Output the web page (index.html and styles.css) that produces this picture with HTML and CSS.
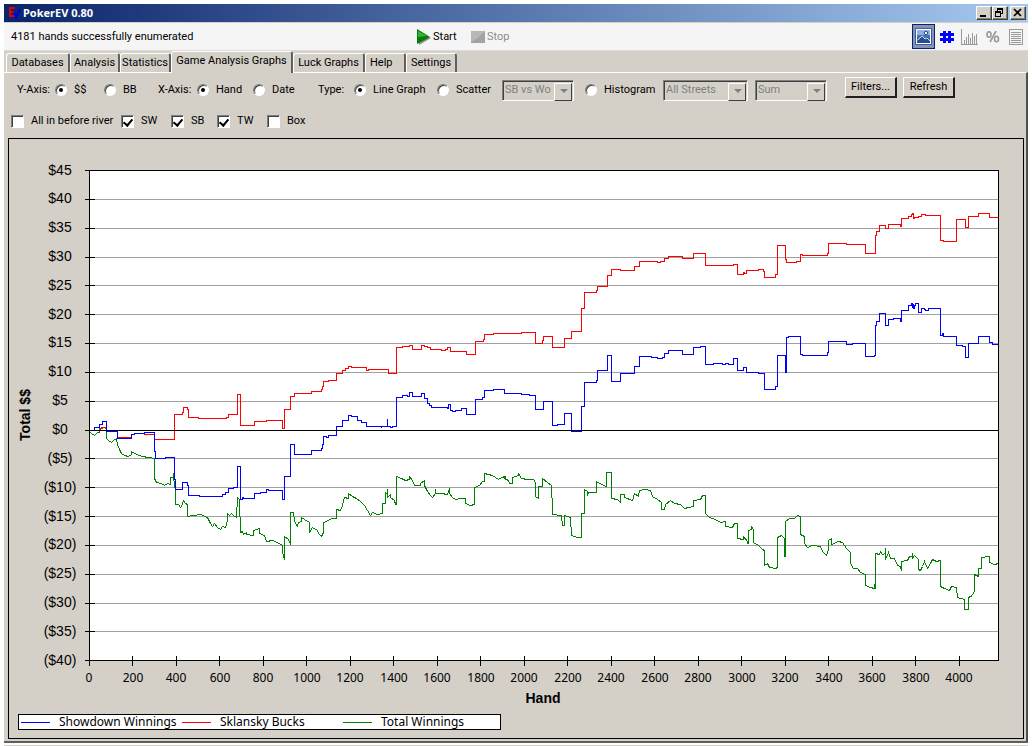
FILE: index.html
```html
<!DOCTYPE html>
<html lang="en">
<head>
<meta charset="utf-8">
<title>PokerEV 0.80</title>
<link rel="stylesheet" href="styles.css">
</head>
<body>
<div class="window">
  <header class="titlebar">
    <svg class="app-icon" width="14" height="14" viewBox="0 0 14 14" aria-hidden="true">
      <path d="M1 1H7V3H3V5H6V7H3V9H7V11H1Z" fill="#e00000"/>
      <path d="M6 6L8 12L12 3" fill="none" stroke="#0000e8" stroke-width="2"/>
    </svg>
    <h1 class="title">PokerEV 0.80</h1>
    <button class="caption" aria-label="Minimize"><svg width="12" height="10" viewBox="0 0 12 10"><path d="M2 7H8V9H2Z"/></svg></button>
    <button class="caption" aria-label="Restore"><svg width="12" height="10" viewBox="0 0 12 10" shape-rendering="crispEdges"><path d="M3 0H9V6H7V5H8V2H4V3H3ZM1 3H7V9H1ZM2 5V8H6V5Z" fill-rule="evenodd"/></svg></button>
    <button class="caption caption-close" aria-label="Close"><svg width="12" height="10" viewBox="0 0 12 10"><path d="M2 1L9 8M9 1L2 8" stroke="#000" stroke-width="1.7"/></svg></button>
  </header>

  <div class="toolbar">
    <p class="status">4181 hands successfully enumerated</p>
    <button class="tool tool-start"><svg width="14" height="16" viewBox="0 0 14 16"><path d="M2 3L14 9L2 16Z" fill="#8a8f8a"/><path d="M0 0L13 8L0 15Z" fill="#0a7a0a"/><path d="M1 2L10 7L1 8Z" fill="#35b335"/></svg>Start</button>
    <button class="tool tool-stop" disabled><svg width="14" height="12" viewBox="0 0 14 12"><path d="M0 0H14V12H0Z" fill="#a3a3a3"/><path d="M0 0H14L7 7L0 11Z" fill="#b8b8b8"/></svg>Stop</button>
    <div class="views">
      <button class="view view-on" aria-label="Graph view"><svg width="17" height="17" viewBox="0 0 17 17"><path d="M.5 .5H16.500V16.500H.5Z" fill="#fff" stroke="#3c5c98"/><path d="M2 2H15V15H2Z" fill="#4773b5"/><path d="M2 2H15V7H2Z" fill="#8eb1df"/><circle cx="11" cy="5" r="1.700" fill="#fff" stroke="#244c8c"/><path d="M2 14L7 8L10 11L12 9L15 12V15H2Z" fill="#274c8b"/><path d="M3 12L7 8L10 11L12 10L15 13" stroke="#c6dbf6" fill="none"/></svg></button>
      <button class="view" aria-label="Hands"><svg width="14" height="12" viewBox="0 0 14 12"><path d="M0 3.500H14M0 8.500H14M4.500 0V12M9.500 0V12" stroke="#00f" stroke-width="3"/></svg></button>
      <button class="view" aria-label="Histogram"><svg width="17" height="16" viewBox="0 0 17 16" shape-rendering="crispEdges"><path d="M.5 0V15.500H17M3.500 11V15M5.500 8V15M7.500 5V15M9.500 9V15M11.500 4V15M13.500 7V15M15.500 5V15" stroke="#999" fill="none"/></svg></button>
      <button class="view" aria-label="Percent"><svg width="14" height="12" viewBox="0 0 14 12"><g fill="none" stroke="#999" stroke-width="1.600"><ellipse cx="3" cy="3.500" rx="2" ry="2.700"/><ellipse cx="10.500" cy="8" rx="2" ry="2.700"/><path d="M10 0L4 11"/></g></svg></button>
      <button class="view" aria-label="Report"><svg width="14" height="16" viewBox="0 0 14 16" shape-rendering="crispEdges"><path d="M.5 .5H13.500V15.500H.5ZM2 3.500H12M2 5.500H12M2 7.500H12M2 9.500H12M2 11.500H12M2 13.500H12" stroke="#999" fill="none"/></svg></button>
    </div>
  </div>

  <nav class="tabs" role="tablist">
    <button class="tab" role="tab">Databases</button>
    <button class="tab" role="tab">Analysis</button>
    <button class="tab" role="tab">Statistics</button>
    <button class="tab tab-on" role="tab" aria-selected="true">Game Analysis Graphs</button>
    <button class="tab" role="tab">Luck Graphs</button>
    <button class="tab tab-left" role="tab">Help</button>
    <button class="tab" role="tab">Settings</button>
  </nav>

  <main class="page">
    <form class="options">
      <span>Y-Axis:</span>
      <label class="choice"><input type="radio" name="yaxis" checked>$$</label>
      <label class="choice"><input type="radio" name="yaxis">BB</label>
      <span>X-Axis:</span>
      <label class="choice"><input type="radio" name="xaxis" checked>Hand</label>
      <label class="choice"><input type="radio" name="xaxis">Date</label>
      <span>Type:</span>
      <label class="choice"><input type="radio" name="type" checked>Line Graph</label>
      <label class="choice"><input type="radio" name="type">Scatter</label>
      <div class="combo"><select disabled aria-label="Scatter series"><option>SB vs Wo</option></select></div>
      <label class="choice"><input type="radio" name="type">Histogram</label>
      <div class="combo"><select disabled aria-label="Streets"><option>All Streets</option></select></div>
      <div class="combo"><select disabled aria-label="Aggregate"><option>Sum</option></select></div>
      <button type="button" class="push">Filters...</button>
      <button type="button" class="push">Refresh</button>
    </form>
    <form class="series">
      <label class="check"><input type="checkbox">All in before river</label>
      <label class="check"><input type="checkbox" checked>SW</label>
      <label class="check"><input type="checkbox" checked>SB</label>
      <label class="check"><input type="checkbox" checked>TW</label>
      <label class="check"><input type="checkbox">Box</label>
    </form>

    <section class="panel">
      <svg class="chart" viewBox="9 139 1014 575" role="img" aria-label="Total winnings by hand">
        <rect x="89" y="170" width="910" height="491" fill="#fff"/>
        <g transform="translate(.5 .5)" shape-rendering="crispEdges" fill="none">
          <path class="grid" d="M89 199H998M89 228H998M89 257H998M89 285H998M89 314H998M89 343H998M89 372H998M89 401H998M89 458H998M89 487H998M89 516H998M89 545H998M89 574H998M89 603H998M89 631H998"/>
          <path class="total" d="M89 431L91 433L94 435L97 432H99V428L102 427H105L106 430V438L108 440L111 442L113 440L116 438L117 444L119 449L121 453L124 455L128 456L131 454V451L136 454L142 456L148 457L154 458V478L156 482L161 483L164 485L167 483L170 484V477H173V473L174 487H175V504H178L180 507L182 504L183 500L185 503L187 504V516L193 515L200 514L207 517L210 523L212 526L214 523L217 527L220 529L222 526L225 527L227 520V513L229 515L231 513L233 515L236 517L237 497L239 499L240 532L242 531L243 534L246 532V534L253 535V530L259 528V533L264 535L266 541L272 540L277 542L282 545V552L284 559V536L288 539L290 544V512H293L294 521L297 526L298 522L301 521V517L304 519L309 522V532L312 527L317 530L318 533L321 536L323 532V522L328 520L331 518H336V509L340 510L342 505L344 497L348 498V493L352 496L356 498L360 501L364 505L367 510L370 515L372 512L377 514L382 513V503H385V492L387 494V488V497L390 494V497L394 500L395 504H396V476L401 478L405 480L409 479V476L412 480L414 485H420V483L424 480V485L427 491L430 495L432 497L435 493V488V493H441L447 494L449 488V493L452 497L455 499L460 498H465V503L470 505L474 504V487L479 485L482 481H484V473L492 475L498 479L501 477L505 476L504 478L508 480L509 483H512V477L518 475V473L521 478L527 479H533L535 482V496L538 498V486H542V478L547 482L551 485L552 510V514L561 515L562 525H564V515L570 517L571 535L577 537H581V513H584V489L587 491V495L588 492H596V481L601 484L606 486V472H611V498L617 499L620 502V494H624V497L632 500L634 493L638 496L639 490L645 489L650 490L652 496L657 499L661 502V509H664L665 504L670 500L674 503L680 504L684 508L688 507L693 506V500L700 499L702 495H705V513L709 517L715 519L720 522L725 521V526L732 527L734 523H737V538L743 539V536L747 541V543H748V530L751 529V526L753 529V542L758 545L762 549L764 550V565L767 563L769 567L775 568L777 567V537L781 535L784 538V556H785V521L789 518L794 518L797 515L800 516V534L804 536V543L807 547L812 545L820 546L822 551L826 555L828 549V540L831 538V544L838 541L842 542L846 548L850 552V563L853 568L857 568L860 572L865 574V585L870 587L874 588V583V588H875V553L879 554L880 551L882 554L885 553V547V559L888 552L890 558H894L897 565L900 566L901 570V561L907 560L909 556H912V552V558L914 555L918 559V569L920 570L922 566L924 561L927 568L930 563L932 559L936 561L940 560V586L944 588L949 590L951 586L956 587L957 597L964 599V609H968V597L972 595L974 590V574L978 576V568H981V557L989 556V562L994 564L998 563"/>
          <path class="sklansky" d="M89 430H100V428H102V427H106V430H117V437H131V434H134V433H144V434H154V439H174V414H182V412H183V407H187V409H188V417H198V418H226V417H228V414H237V394H240V425H254V421H266V420H282V428H284V409H290V396H294V393H311V391H321V389H322V386H323V381H328V380H336V373H342V370H345V368H348V366H351V367H366V370H368V369H388V373H396V347H402V346H409V345H412V349H421V345H424V346H427V347H430V349H441V350H445V349H447V347H450V351H466V354H475V341H483V339H484V334H493V333H521V332H535V343H542V340H543V336H552V347H564V338H571V331H581V308H584V292H596V290H597V286H607V275H611V269H620V270H634V266H639V261H657V262H660V261H664V258H668V256H682V258H693V253H705V265H733V264H737V274H743V272H744V273H746V270H758V269H763V271H764V277H775V274H777V245H785V259H786V262H796V261H800V254H802V255H827V253H828V243H846V244H865V253H875V235H876V231H879V225H885V228H888V224H900V226H901V218H908V216H911V214H912V213H913V218H914V217H918V216H921V214H925V215H940V240H943V241H956V219H965V227H968V216H978V213H989V217H998"/>
          <path class="showdown" d="M89 430H94V427H99V424H102V421H106V431H117V438H131V434H134V433H144V432H154V451H155V458H165V457H174V479H175V489H182V482H187V485H188V495H199V496H222V494H225V492H228V488H233V487H237V466H240V499H242V497H243V498H254V493H260V492H266V489H268V490H282V499H284V476H290V444H294V454H311V450H321V448H322V444H323V436H326V437H328V435H336V426H342V420H348V415H351V416H357V420H361V422H366V426H381V427V426H387V418V426H390V427H392V426H396V397H402V395H407V396H409V392H412V396H421V393H424V398H427V403H429V405H431V407H447V408H448V404H450V410H452V411H455V410H461V408H466V414H475V399H482V397H484V390H493V389H504V393H521V394H529V395H535V409H543V401H552V425H557V424H564V413H571V431H581V406H584V382H596V380H597V370H607V355H611V381H620V373H634V366H639V356H651V357H657V358H662V357H664V353H668V350H682V354H693V347H700V346H705V364H713V363H722V364H725V363H728V364H733V358H737V370H743V367H746V372H758V373H764V389H775V386H777V355H785V372H786V337H788V336H800V354H802V355H827V352H828V341H846V344H852V343H865V356H874V355H875V325H876V321H879V313H885V325H888V319H893V318H900V321H901V310H908V305H911V303H912V307H913V303V308H914V305H915V303H918V312H921V308H924V309H925V310H928V308H940V335H942V333H943V336H956V345H962V346H965V357H968V343H978V335V336H989V342H992V344H998"/>
          <path class="axis" d="M84 170H998V660H84M89 170V665M84 430H998M84 199H94M84 228H94M84 257H94M84 285H94M84 314H94M84 343H94M84 372H94M84 401H94M84 458H94M84 487H94M84 516H94M84 545H94M84 574H94M84 603H94M84 631H94M132 655V665M176 655V665M219 655V665M263 655V665M306 655V665M350 655V665M393 655V665M437 655V665M480 655V665M524 655V665M567 655V665M611 655V665M654 655V665M698 655V665M741 655V665M785 655V665M828 655V665M872 655V665M915 655V665M959 655V665"/>
        </g>
        <g class="y-labels">
          <text x="60" y="175">$45</text><text x="60" y="203">$40</text><text x="60" y="232">$35</text><text x="60" y="261">$30</text><text x="60" y="290">$25</text><text x="60" y="319">$20</text><text x="60" y="347">$15</text><text x="60" y="376">$10</text><text x="60" y="405">$5</text><text x="60" y="434">$0</text><text x="60" y="463">($5)</text><text x="60" y="492">($10)</text><text x="60" y="521">($15)</text><text x="60" y="549">($20)</text><text x="60" y="578">($25)</text><text x="60" y="607">($30)</text><text x="60" y="636">($35)</text><text x="60" y="665">($40)</text>
        </g>
        <g class="x-labels">
          <text x="89" y="682">0</text><text x="133" y="682">200</text><text x="176" y="682">400</text><text x="220" y="682">600</text><text x="263" y="682">800</text><text x="307" y="682">1000</text><text x="350" y="682">1200</text><text x="394" y="682">1400</text><text x="437" y="682">1600</text><text x="481" y="682">1800</text><text x="524" y="682">2000</text><text x="568" y="682">2200</text><text x="611" y="682">2400</text><text x="655" y="682">2600</text><text x="698" y="682">2800</text><text x="742" y="682">3000</text><text x="785" y="682">3200</text><text x="829" y="682">3400</text><text x="872" y="682">3600</text><text x="916" y="682">3800</text><text x="959" y="682">4000</text>
        </g>
        <text class="axis-title" x="543" y="703">Hand</text>
        <text class="axis-title" transform="translate(30 415) rotate(-90)">Total $$</text>
      </svg>
      <ul class="legend">
        <li class="key key-showdown">Showdown Winnings</li>
        <li class="key key-sklansky">Sklansky Bucks</li>
        <li class="key key-total">Total Winnings</li>
      </ul>
    </section>
  </main>
</div>
</body>
</html>
```
FILE: styles.css
```css
* { box-sizing: border-box; }

body {
  margin: 0;
  padding: 4px 4px 0;
  background: #fff;
  color: #000;
  font: 11px/14px Roboto, sans-serif;
}

button, select, input { font: inherit; color: inherit; margin: 0; }
svg { display: block; flex: none; }

.window { background: #d4d0c8; border-bottom: 2px solid #d4d0c8; }

.titlebar {
  display: flex;
  align-items: center;
  height: 18px;
  padding: 0 2px 0 4px;
  background: linear-gradient(to right, #0a246a, #a6caf0);
}
.title {
  flex: 1;
  margin: 0 0 0 1px;
  color: #fff;
  font: bold 11px/14px "Noto Sans", sans-serif;
}
.caption {
  width: 16px;
  height: 14px;
  padding: 1px;
  background: #d4d0c8;
  border: 1px solid;
  border-color: #fff #404040 #404040 #fff;
  box-shadow: inset -1px -1px #808080;
}
.caption-close { margin-left: 2px; }

.toolbar {
  display: flex;
  align-items: center;
  height: 29px;
  padding: 0 1px 0 7px;
  background: #f5f5f5;
  border-top: 1px solid #d4d0c8;
  border-bottom: 1px solid #dcdad4;
}
.status { width: 406px; margin: 0; }
.tool {
  display: flex;
  align-items: center;
  gap: 2px;
  padding: 0;
  border: 0;
  background: none;
}
.tool-start { width: 54px; }
.tool-stop { color: #8c8c8c; }
.views {
  display: flex;
  align-items: center;
  margin-left: auto;
}
.view {
  display: grid;
  place-items: center;
  width: 23px;
  height: 25px;
  padding: 0;
  border: 0;
  background: none;
}
.view-on { background: #8592b5; border: 1px solid #0a246a; }

.tabs {
  display: grid;
  grid-template-columns: 64px 50px 51px 122px 72px 41px 51px;
  align-items: end;
  height: 21px;
  padding-left: 2px;
}
.tab {
  height: 19px;
  padding: 0;
  background: #d4d0c8;
  border: 1px solid #fff;
  border-right: 2px solid #606060;
  border-bottom: 0;
  border-radius: 3px 3px 0 0;
  white-space: nowrap;
}
.tab-left { padding-left: 4px; text-align: left; }
.tab-on {
  height: 22px;
  margin-bottom: -1px;
  padding-bottom: 3px;
  z-index: 1;
}

.page {
  padding: 3px 2px 2px 4px;
  border: solid;
  border-width: 1px 2px 2px 0;
  border-color: #fff #505050 #606060 #fff;
  box-shadow: 0 2px #fff;
  margin-bottom: 2px;
}

.options {
  display: grid;
  grid-template-columns: 38px 49px 54px 39px 56px 65px 36px 83px 65px 83px 78px 92px 90px 58px 52px;
  align-items: center;
  height: 28px;
  padding-left: 9px;
  white-space: nowrap;
}
.series {
  display: grid;
  grid-template-columns: 110px 50px 46px 50px 50px;
  align-items: center;
  height: 34px;
  padding-left: 3px;
  white-space: nowrap;
}
.choice, .check { display: flex; align-items: center; gap: 7px; }
.choice input, .check input {
  appearance: none;
  display: grid;
  place-items: center;
  flex: none;
  width: 12px;
  height: 12px;
  background: #fff;
  border: 1px solid;
  border-color: #808080 #fff #fff #808080;
  box-shadow: inset 1px 1px #404040;
}
.choice input { border-radius: 50%; }
.choice input:checked::before {
  content: "";
  width: 4px;
  height: 4px;
  border-radius: 50%;
  background: #000;
}
.check input { width: 13px; height: 13px; }
.check input:checked::before {
  content: "";
  width: 4px;
  height: 7px;
  border: solid #000;
  border-width: 0 2px 2px 0;
  transform: rotate(40deg);
}

.combo {
  position: relative;
  height: 21px;
  margin-right: 7px;
  color: #808080;
}
.combo:nth-of-type(1) { margin-right: 11px; }
.combo:nth-of-type(3) { margin-right: 18px; }
.combo select {
  appearance: none;
  width: 100%;
  height: 21px;
  padding: 0 17px 0 2px;
  background: #d4d0c8;
  border: 1px solid;
  border-color: #808080 #fff #fff #808080;
  border-radius: 0;
  box-shadow: inset 1px 1px #404040;
  opacity: 1;
}
.combo::before {
  content: "";
  position: absolute;
  top: 3px;
  right: 2px;
  width: 16px;
  height: 16px;
  background: #d4d0c8;
  border: 1px solid;
  border-color: #fff #404040 #404040 #fff;
}
.combo::after {
  content: "";
  position: absolute;
  top: 9px;
  right: 6px;
  border: 4px solid transparent;
  border-top-color: #808080;
  border-bottom: 0;
}
.push {
  height: 21px;
  margin-bottom: 5px;
  padding: 0;
  background: #d4d0c8;
  border: solid;
  border-width: 1px 2px 2px 1px;
  border-color: #fff #202020 #202020 #fff;
}
.options .push:nth-last-child(2) { margin-right: 6px; }

.panel {
  padding-bottom: 8px;
  border: 1px solid #000;
}
.chart { width: 100%; height: auto; }
.grid { stroke: #a0a0a0; }
.axis { stroke: #000; }
.showdown { stroke: #00f; }
.sklansky { stroke: #f00; }
.total { stroke: #008000; }
.y-labels { font: 14px "Liberation Sans", sans-serif; text-anchor: middle; }
.x-labels { font: 12px "Noto Sans", sans-serif; text-anchor: middle; }
.axis-title { font: bold 14px "Liberation Sans", sans-serif; text-anchor: middle; }

.legend {
  display: grid;
  grid-template-columns: 161px 161px 1fr;
  width: 483px;
  max-width: 100%;
  margin: 0 0 0 9px;
  padding: 0 0 0 2px;
  list-style: none;
  font: 12px "Noto Sans", sans-serif;
  background: #fff;
  border: 1px solid #000;
}
.key { display: flex; align-items: center; gap: 9px; line-height: 14px; }
.key::before { content: ""; width: 29px; border-top: 1px solid; }
.key-showdown::before { border-color: #00f; }
.key-sklansky::before { border-color: #f00; }
.key-total::before { border-color: #008000; }
```
